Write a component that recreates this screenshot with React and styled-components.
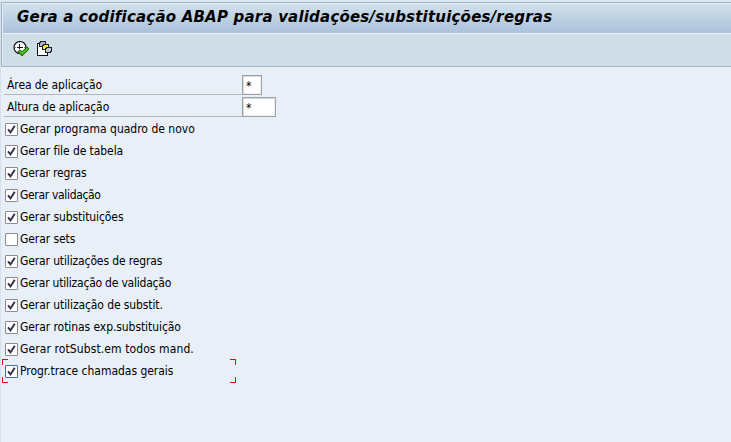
import React, { useState } from "react";
import styled, { createGlobalStyle } from "styled-components";

const Global = createGlobalStyle`
  *, *::before, *::after { box-sizing: border-box; }
  body { margin: 0; background: #e8eff6; overflow: hidden; }
`;
const Window = styled.div`
  width: 731px;
  height: 442px;
  padding-top: 2px;
  padding-left: 1px;
  display: flex;
  flex-direction: column;
  background: linear-gradient(#dde7f0 0 2px, transparent 2px), linear-gradient(90deg, #d5e0ec 0 1px, #e8eff6 1px);
  font: 12px/22px "DejaVu Sans Condensed", "DejaVu Sans", sans-serif;
  color: #000;
`;
const Header = styled.header`
  flex: none;
  border: solid #9fb3c5;
  border-width: 1px 0 1px 1px;
`;
const TitleBar = styled.div`
  height: 30px;
  padding-left: 14px;
  border-top: 1px solid #e6eff7;
  border-left: 1px solid #e0eaf3;
  background: linear-gradient(#d1e0ec, #abc2db);
`;
const Title = styled.h1`
  margin: 0;
  font: italic bold 15px/26px "DejaVu Sans", sans-serif;
  letter-spacing: 0.2px;
  white-space: nowrap;
`;
const Toolbar = styled.div`
  height: 33px;
  padding: 7px 0 0 10px;
  display: flex;
  gap: 8px;
  background: #cfdde7;
  border-top: 1px solid #eaf2f8;
  border-left: 1px solid #e0eaf3;
`;
const ToolButton = styled.button`
  width: 16px;
  height: 16px;
  padding: 0;
  border: 0;
  background: none;
  svg { display: block; }
`;
const Form = styled.form`
  padding: 8px 0 0 3px;
`;
const Fields = styled.div`
  height: 43px;
`;
const Field = styled.label`
  height: 22px;
  display: flex;
`;
const FieldLabel = styled.span`
  width: 238px;
  height: 20px;
  padding-left: 3px;
  line-height: 21px;
  letter-spacing: ${(p) => p.$tracking}px;
  border-bottom: 1px solid #b3b8bd;
`;
const Input = styled.input`
  width: ${(p) => p.$width}px;
  height: 20px;
  padding: 2px 0 0 3px;
  border: 1px solid #9da1a8;
  outline: 0;
  box-shadow: inset 1px 1px 0 #d7d9dd, inset -1px -1px 0 #f0f0f3;
  background: #fff;
  font: 12px/16px "DejaVu Sans Condensed", "DejaVu Sans", sans-serif;
`;
const Option = styled.label`
  position: relative;
  width: 232px;
  height: 22px;
  padding-left: 1px;
  display: flex;
  align-items: center;
  gap: 2px;
  white-space: nowrap;
  letter-spacing: ${(p) => p.$tracking}px;
`;
const Box = styled.span`
  width: 13px;
  height: 13px;
  flex: none;
  border: 1px solid ${(p) => (p.$focused ? "#3f6f9f" : "#8b8d91")};
  border-radius: 1px;
  background: #fff;
  svg { display: block; }
`;
const FocusFrame = styled.svg`
  position: absolute;
  left: -2px;
  top: -1px;
  fill: none;
  stroke: #e00808;
  shape-rendering: crispEdges;
  pointer-events: none;
`;

const ExecuteIcon = () => (
  <svg width="16" height="16" viewBox="0 0 16 16">
    <circle cx="7" cy="6.5" r="6" fill="#fff" stroke="#111" strokeWidth="1.2" />
    <path d="M6.5 3v5M4 6.5h6" stroke="#111" fill="none" />
    <path d="M2 6.5h1M6 1.5h1M11 6.5h1M6 11.5h1" stroke="#777" />
    <path d="M5.6 9.6l3.4 3.2L15.3 6.8" fill="none" stroke="#164b08" strokeWidth="3.6" />
    <path d="M6.2 10l2.8 2.6L15 7.2" fill="none" stroke="#52c01e" strokeWidth="2" />
  </svg>
);
const VariantIcon = () => (
  <svg width="16" height="16" viewBox="0 0 16 16" shapeRendering="crispEdges">
    <path d="M.5 2.5h3l7 4v8H.5z" fill="#fff" />
    <path d="M2 2.5H.5v12h10V12" fill="none" stroke="#111" />
    <path d="M2.5 1.5h1v-1h5v4h-1v1h-5z" fill="#b4b4d6" stroke="#222" />
    <path d="M5.5 4.5h1v-1h5v4h-1v1h-5z" fill="#ffe83a" stroke="#222" />
    <path d="M8.5 7.5h1v-1h5v4h-1v1h-5z" fill="#c4c8e4" stroke="#222" />
  </svg>
);
const Check = () => (
  <svg width="11" height="11" viewBox="0 0 11 11">
    <path d="M2 5.3l2.5 3L8.8 1.7" fill="none" stroke="#30304c" strokeWidth="1.9" />
  </svg>
);

const fields = [
  { label: "Área de aplicação", width: 20, tracking: -0.08 },
  { label: "Altura de aplicação", width: 34, tracking: -0.1 },
];
const options = [
  { label: "Gerar programa quadro de novo", checked: true, tracking: 0 },
  { label: "Gerar file de tabela", checked: true, tracking: -0.08 },
  { label: "Gerar regras", checked: true, tracking: -0.15 },
  { label: "Gerar validação", checked: true, tracking: -0.33 },
  { label: "Gerar substituições", checked: true, tracking: -0.08 },
  { label: "Gerar sets", checked: false, tracking: -0.08 },
  { label: "Gerar utilizações de regras", checked: true, tracking: -0.13 },
  { label: "Gerar utilização de validação", checked: true, tracking: -0.22 },
  { label: "Gerar utilização de substit.", checked: true, tracking: -0.1 },
  { label: "Gerar rotinas exp.substituição", checked: true, tracking: -0.07 },
  { label: "Gerar rotSubst.em todos mand.", checked: true, tracking: 0.1 },
  { label: "Progr.trace chamadas gerais", checked: true, tracking: -0.03, focused: true },
];

function OptionRow({ option }) {
  const [checked, setChecked] = useState(option.checked);
  return (
    <Option $tracking={option.tracking} onClick={() => setChecked(!checked)}>
      <Box $focused={option.focused} role="checkbox" aria-checked={checked}>{checked && <Check />}</Box>
      <span>{option.label}</span>
      {option.focused && (
        <FocusFrame width="234" height="24" viewBox="0 0 234 24">
          <path d="M.5 6V.5H6M228 .5h5.5V6M233.5 18v5.5H228M6 23.5H.5V18" />
        </FocusFrame>
      )}
    </Option>
  );
}

export default function App() {
  return (
    <>
      <Global />
      <Window>
        <Header>
          <TitleBar><Title>Gera a codificação ABAP para validações/substituições/regras</Title></TitleBar>
          <Toolbar>
            <ToolButton aria-label="Executar"><ExecuteIcon /></ToolButton>
            <ToolButton aria-label="Variantes"><VariantIcon /></ToolButton>
          </Toolbar>
        </Header>
        <Form>
          <Fields>
            {fields.map((f) => (
              <Field key={f.label}>
                <FieldLabel $tracking={f.tracking}>{f.label}</FieldLabel>
                <Input $width={f.width} defaultValue="*" />
              </Field>
            ))}
          </Fields>
          {options.map((o) => <OptionRow key={o.label} option={o} />)}
        </Form>
      </Window>
    </>
  );
}
